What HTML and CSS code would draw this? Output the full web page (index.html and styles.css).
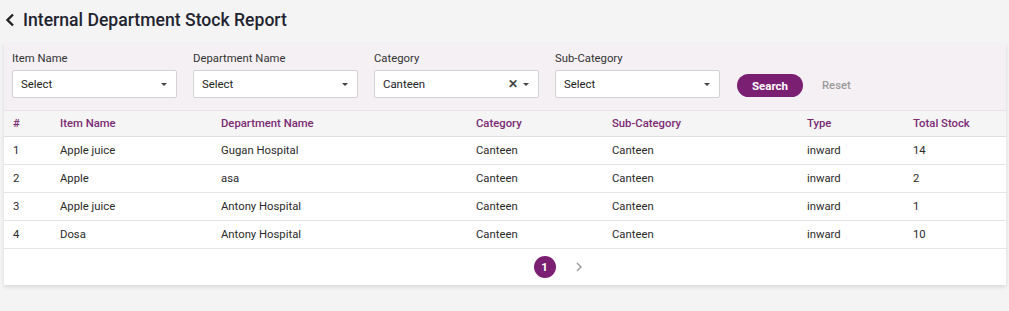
FILE: index.html
```html
<html><head>
    <meta charset="UTF-8">
    <title>Internal Department Stock Report</title>
    <link rel="stylesheet" href="styles.css">
</head>

<body>
    <div class="page-head">
        <span class="back">
            <svg width="10" height="14" viewBox="0 0 10 14"><path d="M8 1.5 L2.5 7 L8 12.5" fill="none" stroke="#222" stroke-width="2.4"/></svg>
        </span>
        <h1>Internal Department Stock Report</h1>
    </div>

    <div class="card">
        <div class="filters">
            <div class="field">
                <label>Item Name</label>
                <div class="select"><span>Select</span><i class="caret"></i></div>
            </div>
            <div class="field">
                <label>Department Name</label>
                <div class="select"><span>Select</span><i class="caret"></i></div>
            </div>
            <div class="field">
                <label>Category</label>
                <div class="select"><span>Canteen</span><b class="clear">&#x2715;</b><i class="caret"></i></div>
            </div>
            <div class="field">
                <label>Sub-Category</label>
                <div class="select"><span>Select</span><i class="caret"></i></div>
            </div>
            <button class="btn-search">Search</button>
            <button class="btn-reset">Reset</button>
        </div>

        <table class="stock-table">
            <thead>
                <tr>
                    <th class="c-no">#</th>
                    <th class="c-item">Item Name</th>
                    <th class="c-dept">Department Name</th>
                    <th class="c-cat">Category</th>
                    <th class="c-sub">Sub-Category</th>
                    <th class="c-type">Type</th>
                    <th>Total Stock</th>
                </tr>
            </thead>
            <tbody>
                <tr><td>1</td><td>Apple juice</td><td>Gugan Hospital</td><td>Canteen</td><td>Canteen</td><td>inward</td><td>14</td></tr>
                <tr><td>2</td><td>Apple</td><td>asa</td><td>Canteen</td><td>Canteen</td><td>inward</td><td>2</td></tr>
                <tr><td>3</td><td>Apple juice</td><td>Antony Hospital</td><td>Canteen</td><td>Canteen</td><td>inward</td><td>1</td></tr>
                <tr><td>4</td><td>Dosa</td><td>Antony Hospital</td><td>Canteen</td><td>Canteen</td><td>inward</td><td>10</td></tr>
            </tbody>
        </table>

        <div class="pager">
            <span class="page active">1</span>
            <span class="next">
                <svg width="8" height="10" viewBox="0 0 8 10"><path d="M2 1 L6 5 L2 9" fill="none" stroke="#9a9a9a" stroke-width="1.4"/></svg>
            </span>
        </div>
    </div>
</body></html>
```

FILE: styles.css
```css
body {
    margin: 0;
    padding: 0;
    background-color: #f4f4f4;
    font-family: Roboto, "Liberation Sans", sans-serif;
    font-size: 12px;
    color: #333;
}

.page-head {
    display: flex;
    align-items: center;
    height: 40px;
    padding-left: 5px;
    padding-bottom: 3px;
}

.back {
    display: flex;
    width: 18px;
}

.page-head h1 {
    margin: 0;
    font-size: 17.6px;
    font-weight: 500;
    color: #1f2430;
}

.card {
    margin: 0 3px 0 4px;
    background-color: #fff;
    box-shadow: 0 2px 4px rgba(0, 0, 0, 0.12);
}

.filters {
    display: flex;
    align-items: flex-end;
    gap: 16px;
    background-color: #f4f0f4;
    padding: 9px 8px 12px 8px;
    border-bottom: 1px solid #e6e2e6;
}

.field {
    display: flex;
    flex-direction: column;
}

.field label {
    font-size: 11.3px;
    color: #333;
    margin-bottom: 5px;
}

.select {
    display: flex;
    align-items: center;
    width: 163px;
    height: 26px;
    background-color: #fff;
    border: 1px solid #d2d2d2;
    border-radius: 2px;
}

.select span {
    flex: 1;
    padding-left: 8px;
    font-size: 11.4px;
    color: #222;
}

.clear {
    font-size: 12px;
    color: #444;
    margin-right: 5px;
}

.caret {
    width: 0;
    height: 0;
    border-left: 3px solid transparent;
    border-right: 3px solid transparent;
    border-top: 3px solid #444;
    margin-right: 9px;
}

.btn-search {
    height: 23px;
    width: 66px;
    margin-bottom: 1px;
    margin-left: 1px;
    border: none;
    border-radius: 12px;
    background-color: #7b1f73;
    color: #fff;
    font-family: inherit;
    font-size: 11.5px;
    font-weight: 700;
    cursor: pointer;
}

.btn-reset {
    height: 23px;
    margin-bottom: 1px;
    margin-left: 0;
    padding: 0 3px;
    border: none;
    background: none;
    color: #9a9a9a;
    font-family: inherit;
    font-size: 11.3px;
    font-weight: 500;
}

.stock-table {
    width: 100%;
    border-collapse: collapse;
    font-size: 11.3px;
}

.stock-table th {
    text-align: left;
    font-weight: 500;
    color: #7b2a74;
    background-color: #f5f5f5;
    height: 25px;
    padding: 0 0 0 9px;
    border-bottom: 1px solid #dedede;
}

.stock-table td {
    height: 28px;
    padding: 0 0 0 9px;
    border-bottom: 1px solid #e4e4e4;
    color: #2a2a2a;
}

.c-no { width: 38px; }
.c-item { width: 152px; }
.c-dept { width: 246px; }
.c-cat { width: 127px; }
.c-sub { width: 186px; }
.c-type { width: 97px; }

.pager {
    display: flex;
    justify-content: center;
    align-items: center;
    gap: 19px;
    height: 36px;
    padding-left: 106px;
}

.page {
    display: flex;
    justify-content: center;
    align-items: center;
    width: 22px;
    height: 22px;
    border-radius: 50%;
    background-color: #7b1f73;
    color: #fff;
    font-weight: 700;
    font-size: 11.5px;
}

.next {
    display: flex;
}
```
